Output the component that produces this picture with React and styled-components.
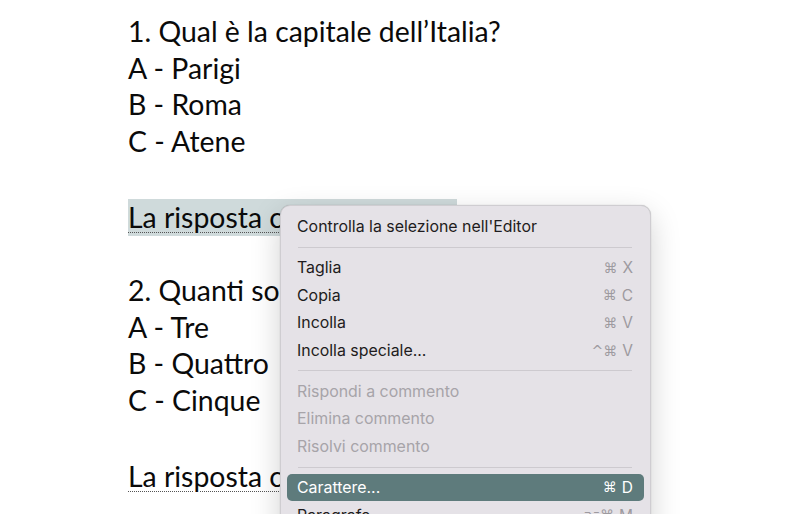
import styled, { createGlobalStyle } from "styled-components";

const GlobalStyle = createGlobalStyle`
  html, body {
    margin: 0;
    padding: 0;
    background: #ffffff;
    width: 800px;
    height: 514px;
    overflow: hidden;
  }
`;

const Page = styled.div`
  position: relative;
  width: 800px;
  height: 514px;
  overflow: hidden;
  background: #ffffff;
`;

const Doc = styled.div`
  padding: 13px 0 0 128px;
  font-family: "Lato", "Open Sans", sans-serif;
  font-size: 28.4px;
  color: #0a0a0a;
`;

const Line = styled.div`
  height: 36.6px;
  line-height: 36.6px;
  white-space: nowrap;
  margin-top: ${(p) => (p.$answer ? "3px" : "0")};
`;

const Selected = styled.span`
  display: inline-block;
  height: 36.6px;
  padding-right: ${(p) => (p.$selected ? "14px" : "0")};
  background: ${(p) => (p.$selected ? "#cfdadb" : "transparent")};
  text-decoration: underline dotted #555;
  text-decoration-thickness: 1px;
  text-underline-offset: 4px;
`;

const Menu = styled.div`
  position: absolute;
  left: 280px;
  top: 205px;
  width: 371px;
  padding: 7px 6px;
  box-sizing: border-box;
  background: #e5e2e7;
  border: 1px solid #cfcdd1;
  border-radius: 10px;
  box-shadow: 0 10px 30px rgba(0, 0, 0, 0.18), 0 0 1px rgba(0, 0, 0, 0.3);
  font-family: "Inter", "DejaVu Sans", sans-serif;
  font-size: 15.9px;
`;

const Item = styled.div`
  display: flex;
  align-items: center;
  justify-content: space-between;
  height: 27.7px;
  padding: 0 11px 0 10px;
  border-radius: 5px;
  color: ${(p) => (p.$active ? "#ffffff" : p.$disabled ? "#a7a4a9" : "#1e1c20")};
  background: ${(p) => (p.$active ? "#5e7b7c" : "transparent")};
`;

const Shortcut = styled.span`
  display: flex;
  gap: 5px;
  align-items: center;
  color: ${(p) => (p.$active ? "#ffffff" : "#9d9a9f")};
  font-size: 15.5px;
`;

const Key = styled.span`
  font-family: "DejaVu Sans", sans-serif;
  font-size: 14px;
`;

const Separator = styled.div`
  height: 13px;
  display: flex;
  align-items: center;
  padding: 0 12px 0 11px;

  &::after {
    content: "";
    flex: 1;
    height: 1px;
    background: #cdcacf;
  }
`;

const groups = [
  [{ label: "Controlla la selezione nell'Editor" }],
  [
    { label: "Taglia", mods: "⌘", key: "X" },
    { label: "Copia", mods: "⌘", key: "C" },
    { label: "Incolla", mods: "⌘", key: "V" },
    { label: "Incolla speciale...", mods: "^⌘", key: "V" },
  ],
  [
    { label: "Rispondi a commento", disabled: true },
    { label: "Elimina commento", disabled: true },
    { label: "Risolvi commento", disabled: true },
  ],
  [
    { label: "Carattere...", mods: "⌘", key: "D", active: true },
    { label: "Paragrafo...", mods: "⌥⌘", key: "M" },
    { label: "Elenchi puntati e numerati..." },
  ],
];

const ContextMenu = () => (
  <Menu>
    {groups.map((group, gi) => (
      <div key={gi}>
        {gi > 0 && <Separator />}
        {group.map((item) => (
          <Item key={item.label} $active={item.active} $disabled={item.disabled}>
            <span>{item.label}</span>
            {item.key && (
              <Shortcut $active={item.active}>
                <Key>{item.mods}</Key>
                <span>{item.key}</span>
              </Shortcut>
            )}
          </Item>
        ))}
      </div>
    ))}
  </Menu>
);

export default function App() {
  return (
    <Page>
      <GlobalStyle />
      <Doc>
        <Line>1. Qual è la capitale dell’Italia?</Line>
        <Line>A - Parigi</Line>
        <Line>B - Roma</Line>
        <Line>C - Atene</Line>
        <Line />
        <Line $answer>
          <Selected $selected>La risposta corretta è la B</Selected>
        </Line>
        <Line />
        <Line>2. Quanti sono i punti cardinali?</Line>
        <Line>A - Tre</Line>
        <Line>B - Quattro</Line>
        <Line>C - Cinque</Line>
        <Line />
        <Line $answer>
          <Selected>La risposta corretta è la B</Selected>
        </Line>
      </Doc>
      <ContextMenu />
    </Page>
  );
}
